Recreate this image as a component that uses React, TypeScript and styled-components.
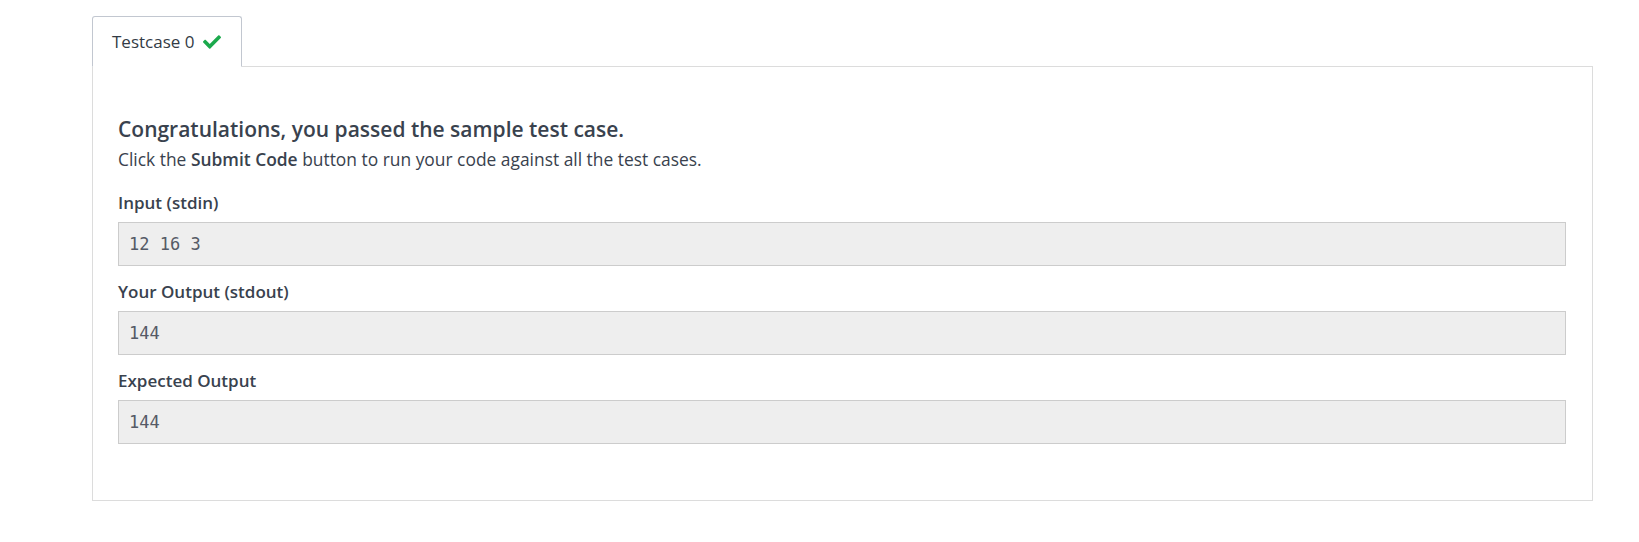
import React from "react";
import styled, { createGlobalStyle } from "styled-components";
import { FaCheck } from "react-icons/fa";

const Global = createGlobalStyle`
  html, body { margin: 0; padding: 0; background: #fff; }
  body { font-family: "Open Sans", "Noto Sans", sans-serif; color: #39424e; }
`;

const Page = styled.div`
  padding: 16px 46px 0 92px;
  width: 1501px;
`;

const TabBar = styled.div`
  display: flex;
`;

const Tab = styled.div`
  position: relative;
  z-index: 1;
  display: flex;
  align-items: center;
  gap: 9px;
  height: 49px;
  padding: 0 20px 0 19px;
  margin-bottom: -1px;
  background: #fff;
  border: 1px solid #c2c7d0;
  border-bottom: 1px solid #fff;
  border-radius: 3px 3px 0 0;
  font-size: 17px;
  color: #333b46;
`;

const Check = styled(FaCheck)`
  color: #1ba94c;
  font-size: 18px;
`;

const Panel = styled.div`
  border: 1px solid #dcdcdc;
  padding: 47px 26px 56px 25px;
`;

const Title = styled.h2`
  margin: 0;
  font-size: 21px;
  font-weight: 600;
  line-height: 30px;
  color: #39424e;
`;

const Sub = styled.p`
  margin: 2px 0 0;
  font-size: 17.4px;
  line-height: 26px;
  color: #39424e;
  b { font-weight: 600; }
`;

const Section = styled.div<{ $first?: boolean }>`
  margin-top: ${(p) => (p.$first ? "19px" : "14px")};
`;

const Label = styled.div`
  font-size: 17px;
  font-weight: 600;
  line-height: 24px;
  margin-bottom: 7px;
  color: #39424e;
`;

const Box = styled.pre`
  margin: 0;
  height: 42px;
  box-sizing: content-box;
  display: flex;
  align-items: center;
  padding: 0 10px;
  background: #eeeeee;
  border: 1px solid #cccccc;
  font-family: "DejaVu Sans Mono", "Liberation Mono", monospace;
  font-size: 17px;
  color: #555a66;
`;

const rows = [
  { label: "Input (stdin)", value: "12 16 3" },
  { label: "Your Output (stdout)", value: "144" },
  { label: "Expected Output", value: "144" },
];

export default function App() {
  return (
    <Page>
      <Global />
      <TabBar>
        <Tab>
          Testcase 0 <Check />
        </Tab>
      </TabBar>
      <Panel>
        <Title>Congratulations, you passed the sample test case.</Title>
        <Sub>
          Click the <b>Submit Code</b> button to run your code against all the test cases.
        </Sub>
        {rows.map((r, i) => (
          <Section key={r.label} $first={i === 0}>
            <Label>{r.label}</Label>
            <Box>{r.value}</Box>
          </Section>
        ))}
      </Panel>
    </Page>
  );
}
